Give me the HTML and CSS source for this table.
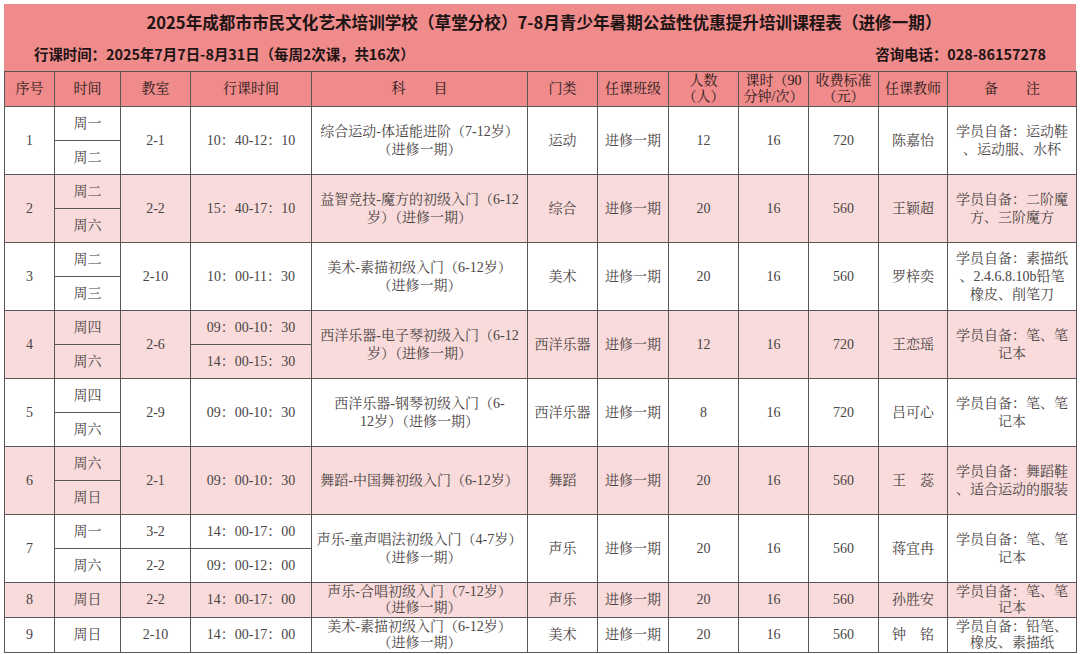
FILE: index.html
```html
<!DOCTYPE html>
<html lang="zh-CN">
<head>
<meta charset="utf-8">
<title>课程表</title>
<link rel="stylesheet" href="styles.css">
</head>
<body>
<div class="sheet">
  <header class="banner">
    <h1 class="title">2025年成都市市民文化艺术培训学校（草堂分校）7-8月青少年暑期公益性优惠提升培训课程表（进修一期）</h1>
    <div class="info">
      <span>行课时间：2025年7月7日-8月31日（每周2次课，共16次）</span>
      <span>咨询电话：028-86157278</span>
    </div>
  </header>
  <table class="schedule">
    <colgroup>
      <col class="c-no"><col class="c-day"><col class="c-room"><col class="c-time"><col class="c-subj">
      <col class="c-cat"><col class="c-cls"><col class="c-num"><col class="c-hrs"><col class="c-fee">
      <col class="c-tch"><col class="c-note">
    </colgroup>
    <thead>
      <tr>
        <th>序号</th><th>时间</th><th>教室</th><th>行课时间</th><th>科　　目</th><th>门类</th><th>任课班级</th>
        <th>人数<br>（人）</th><th>课时（90<br>分钟/次）</th><th>收费标准<br>（元）</th><th>任课教师</th><th>备　　注</th>
      </tr>
    </thead>
    <tbody>
      <tr>
        <td rowspan="2">1</td><td>周一</td><td rowspan="2">2-1</td><td rowspan="2">10：40-12：10</td>
        <td rowspan="2" class="subj">综合运动-体适能进阶（7-12岁）<br>（进修一期）</td>
        <td rowspan="2">运动</td><td rowspan="2">进修一期</td><td rowspan="2">12</td><td rowspan="2">16</td><td rowspan="2">720</td>
        <td rowspan="2">陈嘉怡</td><td rowspan="2" class="note">学员自备：运动鞋<br>、运动服、水杯</td>
      </tr>
      <tr><td>周二</td></tr>

      <tr class="alt">
        <td rowspan="2">2</td><td>周二</td><td rowspan="2">2-2</td><td rowspan="2">15：40-17：10</td>
        <td rowspan="2" class="subj">益智竞技-魔方的初级入门（6-12<br>岁）（进修一期）</td>
        <td rowspan="2">综合</td><td rowspan="2">进修一期</td><td rowspan="2">20</td><td rowspan="2">16</td><td rowspan="2">560</td>
        <td rowspan="2">王颖超</td><td rowspan="2" class="note">学员自备：二阶魔<br>方、三阶魔方</td>
      </tr>
      <tr class="alt"><td>周六</td></tr>

      <tr>
        <td rowspan="2">3</td><td>周二</td><td rowspan="2">2-10</td><td rowspan="2">10：00-11：30</td>
        <td rowspan="2" class="subj">美术-素描初级入门（6-12岁）<br>（进修一期）</td>
        <td rowspan="2">美术</td><td rowspan="2">进修一期</td><td rowspan="2">20</td><td rowspan="2">16</td><td rowspan="2">560</td>
        <td rowspan="2">罗梓奕</td><td rowspan="2" class="note">学员自备：素描纸<br>、2.4.6.8.10b铅笔<br>橡皮、削笔刀</td>
      </tr>
      <tr><td>周三</td></tr>

      <tr class="alt">
        <td rowspan="2">4</td><td>周四</td><td rowspan="2">2-6</td><td>09：00-10：30</td>
        <td rowspan="2" class="subj">西洋乐器-电子琴初级入门（6-12<br>岁）（进修一期）</td>
        <td rowspan="2">西洋乐器</td><td rowspan="2">进修一期</td><td rowspan="2">12</td><td rowspan="2">16</td><td rowspan="2">720</td>
        <td rowspan="2">王恋瑶</td><td rowspan="2" class="note">学员自备：笔、笔<br>记本</td>
      </tr>
      <tr class="alt"><td>周六</td><td>14：00-15：30</td></tr>

      <tr>
        <td rowspan="2">5</td><td>周四</td><td rowspan="2">2-9</td><td rowspan="2">09：00-10：30</td>
        <td rowspan="2" class="subj">西洋乐器-钢琴初级入门（6-<br>12岁）（进修一期）</td>
        <td rowspan="2">西洋乐器</td><td rowspan="2">进修一期</td><td rowspan="2">8</td><td rowspan="2">16</td><td rowspan="2">720</td>
        <td rowspan="2">吕可心</td><td rowspan="2" class="note">学员自备：笔、笔<br>记本</td>
      </tr>
      <tr><td>周六</td></tr>

      <tr class="alt">
        <td rowspan="2">6</td><td>周六</td><td rowspan="2">2-1</td><td rowspan="2">09：00-10：30</td>
        <td rowspan="2" class="subj">舞蹈-中国舞初级入门（6-12岁）</td>
        <td rowspan="2">舞蹈</td><td rowspan="2">进修一期</td><td rowspan="2">20</td><td rowspan="2">16</td><td rowspan="2">560</td>
        <td rowspan="2">王　蕊</td><td rowspan="2" class="note">学员自备：舞蹈鞋<br>、适合运动的服装</td>
      </tr>
      <tr class="alt"><td>周日</td></tr>

      <tr>
        <td rowspan="2">7</td><td>周一</td><td>3-2</td><td>14：00-17：00</td>
        <td rowspan="2" class="subj">声乐-童声唱法初级入门（4-7岁）<br>（进修一期）</td>
        <td rowspan="2">声乐</td><td rowspan="2">进修一期</td><td rowspan="2">20</td><td rowspan="2">16</td><td rowspan="2">560</td>
        <td rowspan="2">蒋宜冉</td><td rowspan="2" class="note">学员自备：笔、笔<br>记本</td>
      </tr>
      <tr><td>周六</td><td>2-2</td><td>09：00-12：00</td></tr>

      <tr class="alt tight">
        <td>8</td><td>周日</td><td>2-2</td><td>14：00-17：00</td>
        <td class="subj">声乐-合唱初级入门（7-12岁）<br>（进修一期）</td>
        <td>声乐</td><td>进修一期</td><td>20</td><td>16</td><td>560</td>
        <td>孙胜安</td><td class="note">学员自备：笔、笔<br>记本</td>
      </tr>

      <tr class="tight">
        <td>9</td><td>周日</td><td>2-10</td><td>14：00-17：00</td>
        <td class="subj">美术-素描初级入门（6-12岁）<br>（进修一期）</td>
        <td>美术</td><td>进修一期</td><td>20</td><td>16</td><td>560</td>
        <td>钟　铭</td><td class="note">学员自备：铅笔、<br>橡皮、素描纸</td>
      </tr>
    </tbody>
  </table>
</div>
</body>
</html>
```

FILE: styles.css
```css
html, body {
  margin: 0;
  padding: 0;
  background: #ffffff;
}

body {
  padding: 4px;
}

.sheet {
  width: 1072px;
}

.banner {
  background: #ef8b8b;
  display: flex;
  flex-direction: column;
  font-family: "Noto Sans CJK SC", "Noto Sans", sans-serif;
  color: #1e1414;
  font-weight: 700;
}

.title {
  margin: 0;
  height: 35px;
  display: flex;
  align-items: center;
  justify-content: center;
  padding-left: 8px;
  font-size: 16.6px;
  font-weight: 700;
  letter-spacing: 0;
}

.info {
  height: 32px;
  display: flex;
  align-items: center;
  justify-content: space-between;
  padding: 0 30px 3px 30px;
  box-sizing: border-box;
  font-size: 14.4px;
}

.schedule {
  width: 1072px;
  border-collapse: collapse;
  table-layout: fixed;
  font-family: "Liberation Serif", "Noto Serif CJK SC", "Noto Sans CJK SC", serif;
  font-size: 14px;
  color: #4a4444;
}

.c-no { width: 50px; }
.c-day { width: 66px; }
.c-room { width: 70px; }
.c-time { width: 121px; }
.c-subj { width: 216px; }
.c-cat { width: 70px; }
.c-cls { width: 71px; }
.c-num { width: 70px; }
.c-hrs { width: 70px; }
.c-fee { width: 70px; }
.c-tch { width: 69px; }
.c-note { width: 129px; }

.schedule th,
.schedule td {
  border: 1px solid #5c5656;
  text-align: center;
  vertical-align: middle;
  padding: 0 2px;
  line-height: 18px;
  font-weight: 400;
  white-space: nowrap;
}

.schedule thead tr {
  height: 35px;
  background: #ef8b8b;
}

.schedule th {
  color: #2a1818;
  line-height: 16px;
  padding: 0 2px;
}

.schedule tbody tr {
  height: 34px;
  background: #ffffff;
}

.schedule tbody tr.alt {
  background: #f9dbdb;
}

.schedule tr.tight td {
  line-height: 16px;
  height: 33px;
  padding: 0 2px;
  overflow: hidden;
}

.schedule tr.tight td.subj,
.schedule tr.tight td.note {
  padding-top: 1px;
  vertical-align: top;
}
```
